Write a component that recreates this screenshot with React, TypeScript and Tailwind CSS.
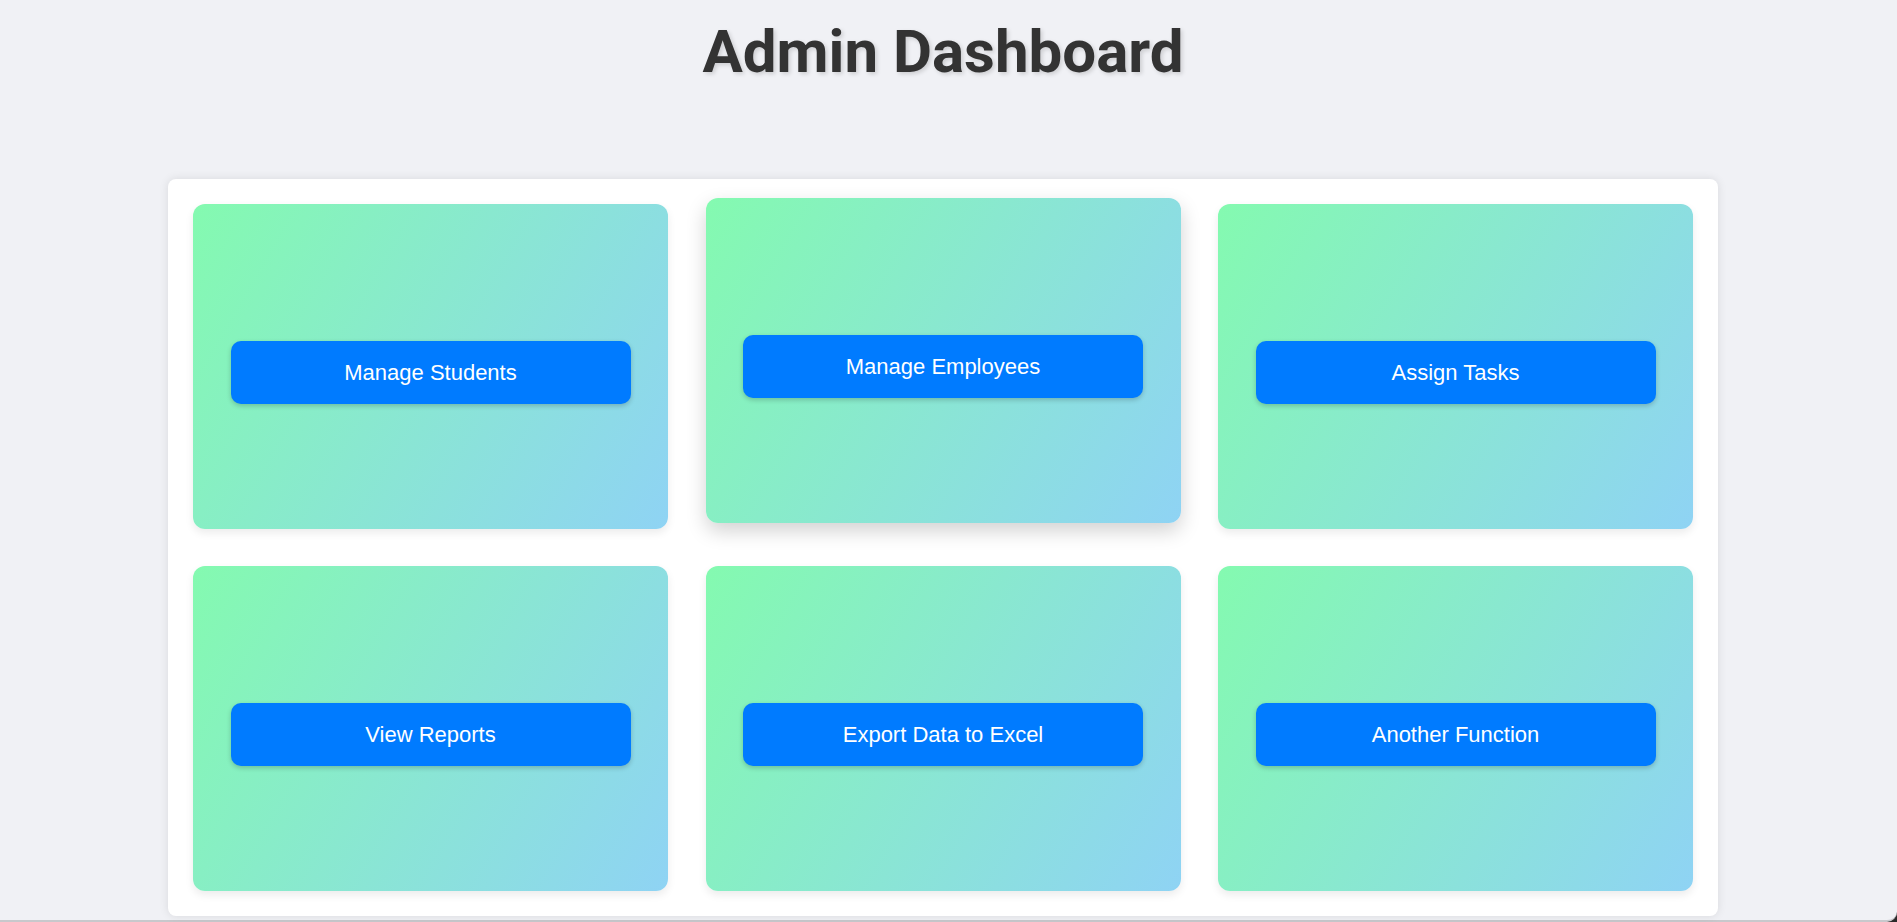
import React from "react";

const items = [
  "Manage Students",
  "Manage Employees",
  "Assign Tasks",
  "View Reports",
  "Export Data to Excel",
  "Another Function",
];

export default function App() {
  return (
    <div className="h-[922px] w-full bg-[#2a2a2a] overflow-hidden">
      <div className="h-full w-full bg-[#f0f1f5] rounded-br-[10px] border-b-2 border-[#c8c8cc] flex flex-col items-center pr-[11px]">
        <h1
          className="mt-[22px] text-[60px] leading-none font-bold text-[#333333] [text-shadow:2px_2px_4px_rgba(0,0,0,0.15)]"
          style={{ fontFamily: "Roboto, 'Noto Sans', sans-serif" }}
        >
          Admin Dashboard
        </h1>
        <div className="mt-[97px] w-[1550px] bg-white rounded-[8px] p-[25px] shadow-[0_0_10px_rgba(0,0,0,0.1)] grid grid-cols-3 gap-x-[37.5px] gap-y-[37px]">
          {items.map((label, i) => (
            <div
              key={label}
              className={
                i === 1
                  ? "h-[325px] rounded-[12px] bg-[linear-gradient(120deg,#84fab0_0%,#8fd3f4_100%)] flex items-center justify-center -translate-y-[6px] shadow-[0_8px_20px_rgba(0,0,0,0.18)]"
                  : "h-[325px] rounded-[12px] bg-[linear-gradient(120deg,#84fab0_0%,#8fd3f4_100%)] flex items-center justify-center shadow-[0_4px_8px_rgba(0,0,0,0.08)]"
              }
            >
              <button
                className="mt-[12px] w-[400px] h-[63px] rounded-[10px] bg-[#007bff] text-white text-[22px] shadow-[0_2px_5px_rgba(0,0,0,0.2)]"
                style={{ fontFamily: "'Liberation Sans', Arial, sans-serif" }}
              >
                {label}
              </button>
            </div>
          ))}
        </div>
      </div>
    </div>
  );
}
